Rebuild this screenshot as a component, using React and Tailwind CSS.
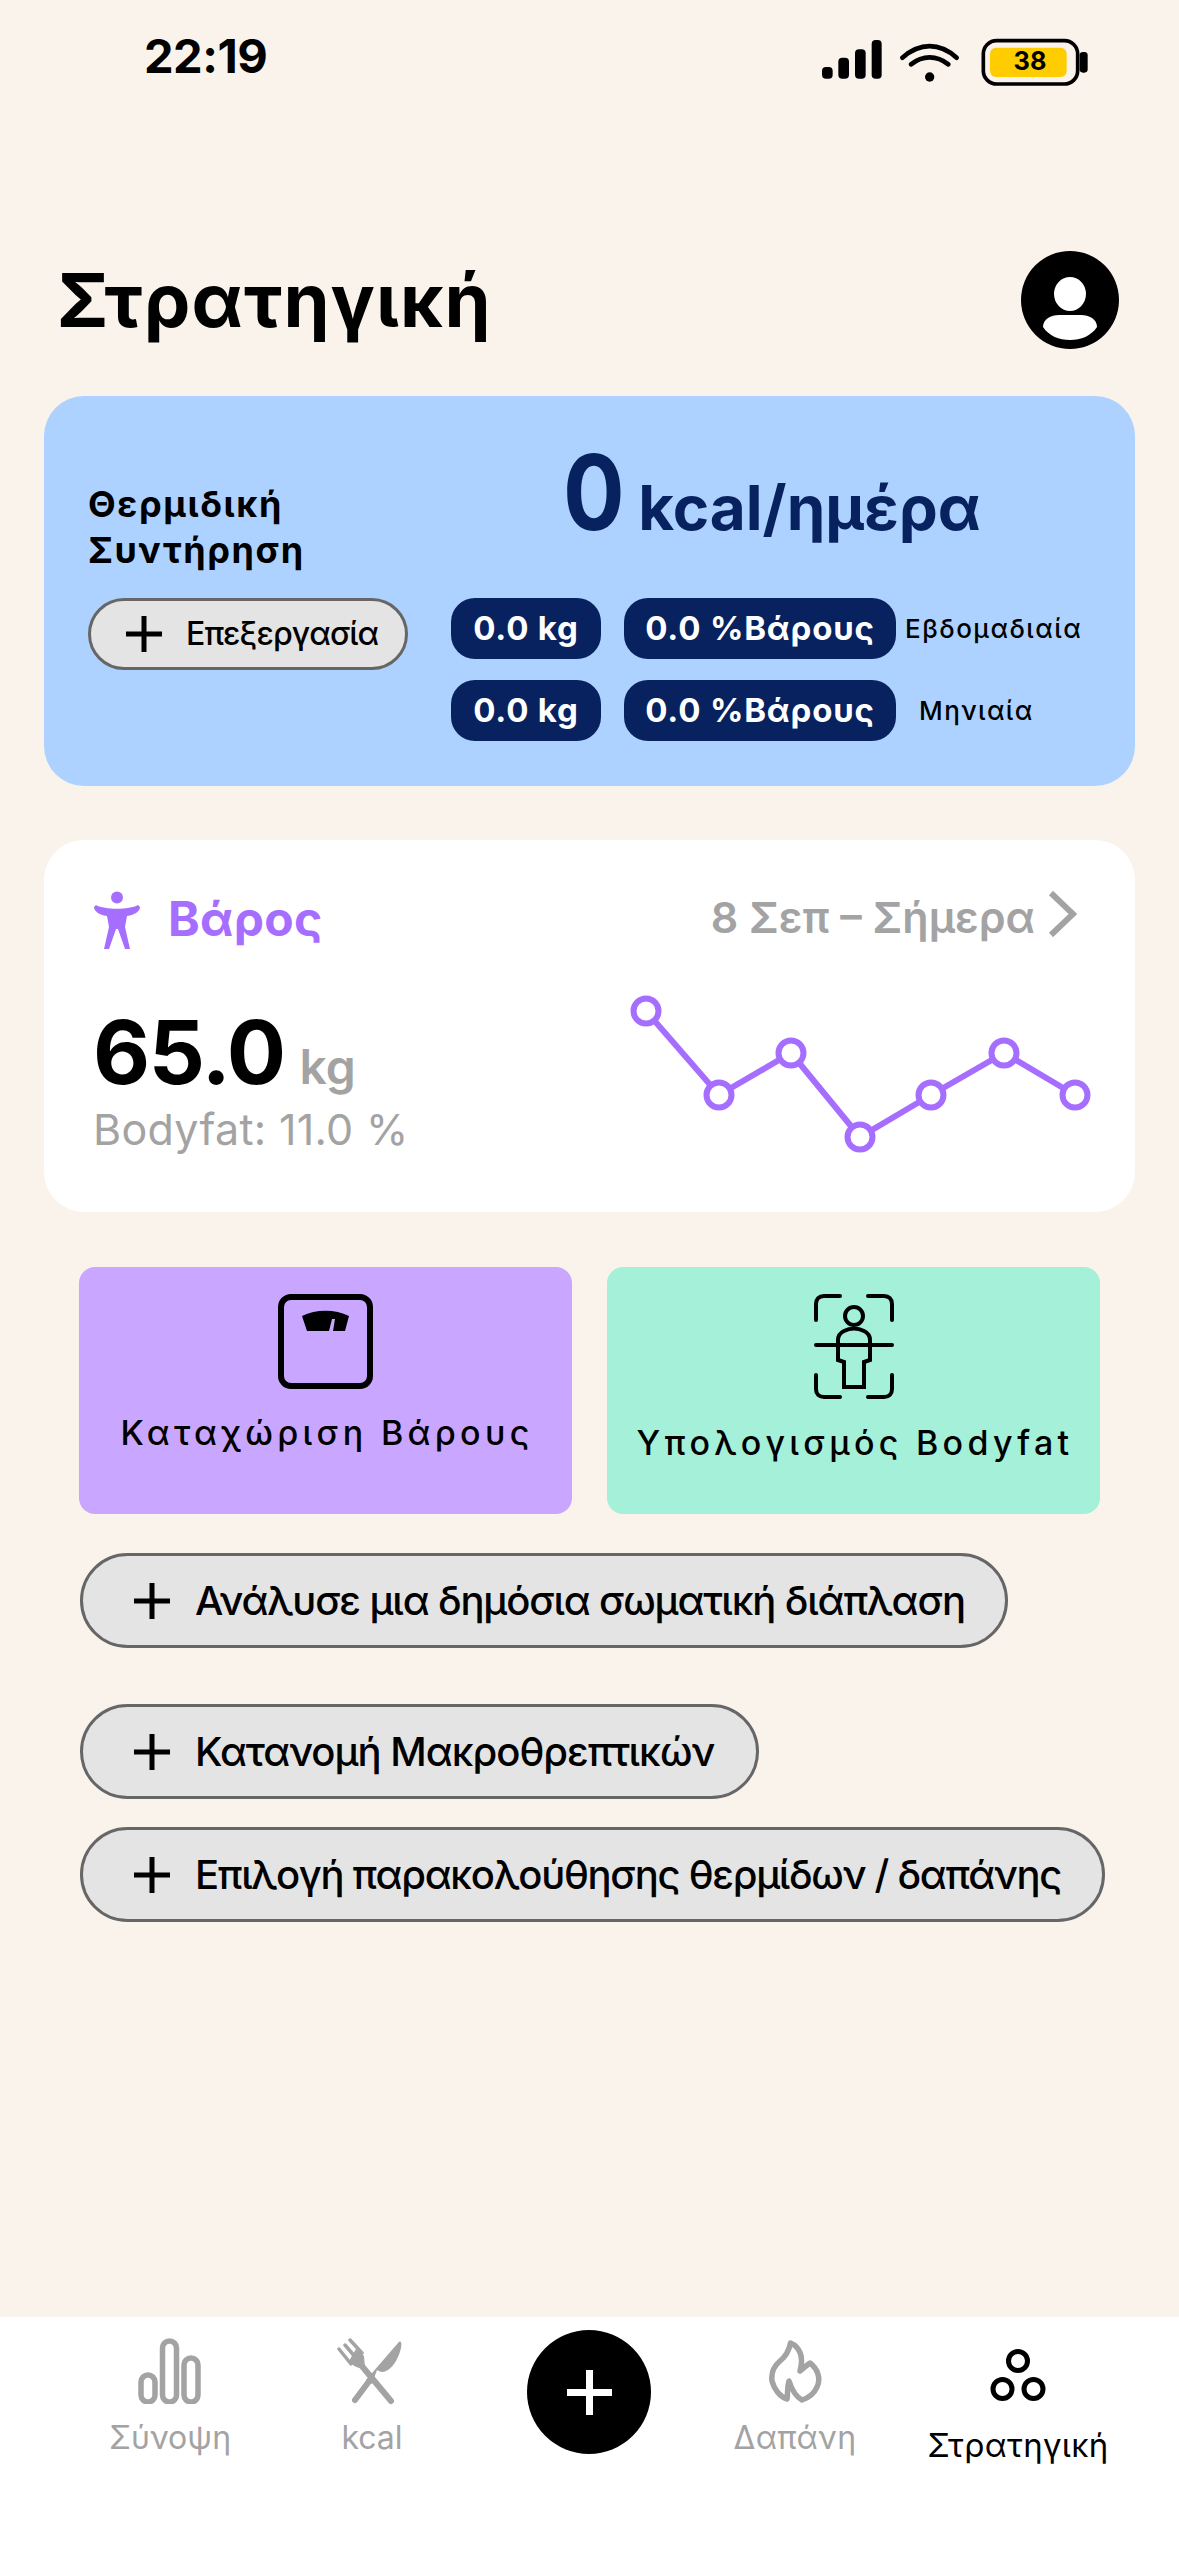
import React from "react";

function StatusIcons() {
  return (
    <svg width="340" height="80" viewBox="0 0 1020 240">
      <rect x="126" y="138" width="32" height="35" rx="12" fill="#000" />
      <rect x="175" y="110" width="32" height="63" rx="12" fill="#000" />
      <rect x="225" y="85" width="32" height="88" rx="12" fill="#000" />
      <rect x="275" y="57" width="30" height="116" rx="12" fill="#000" />
      <path d="M367 110 C 420 64, 478 64, 530 110" fill="none" stroke="#000" strokeWidth="14" strokeLinecap="round" />
      <path d="M393 130 C 428 102, 470 102, 505 130" fill="none" stroke="#000" strokeWidth="14" strokeLinecap="round" />
      <circle cx="449" cy="168" r="14" fill="#000" />
      <rect x="610" y="59" width="283" height="130" rx="40" fill="none" stroke="#000" strokeWidth="11" />
      <rect x="630" y="80" width="230" height="88" rx="18" fill="#FFCC00" />
      <rect x="899" y="93" width="24" height="62" rx="10" fill="#000" />
      <text x="750" y="146" textAnchor="middle" fontSize="76" fontWeight="700" fill="#000" className="font-[family-name:Inter]">38</text>
    </svg>
  );
}

function Plus({ size = 36 }) {
  return (
    <svg width={size} height={size} viewBox="0 0 36 36" className="shrink-0">
      <path d="M18 0V36M0 18H36" stroke="#000" strokeWidth="5" />
    </svg>
  );
}

function Pill({ width, track, children, className }) {
  return (
    <div className={`flex h-[95px] items-center rounded-full border-[3px] border-[#666] bg-[#e4e4e4] pl-[51px] ${width} ${className || ""}`}>
      <Plus />
      <span className={`ml-[25px] whitespace-nowrap text-[40px] font-medium text-black ${track}`}>{children}</span>
    </div>
  );
}

function Stat({ children, w }) {
  return (
    <div className={`flex h-[61px] items-center justify-center rounded-[24px] bg-[#07225f] text-[33px] font-bold tracking-[0.8px] text-white ${w}`}>
      {children}
    </div>
  );
}

function WeightChart() {
  const pts = [[21, 21], [94, 105], [166, 63], [235, 147], [306, 105], [379, 63], [450, 105]];
  return (
    <svg width="480" height="170" viewBox="0 0 480 170">
      <polyline points={pts.map((p) => p.join(",")).join(" ")} fill="none" stroke="#a66eff" strokeWidth="6" />
      {pts.map((p) => (
        <circle key={p[0]} cx={p[0]} cy={p[1]} r="12.5" fill="#fff" stroke="#a66eff" strokeWidth="6" />
      ))}
    </svg>
  );
}

function ScaleIcon() {
  return (
    <svg width="95" height="95" viewBox="0 0 95 95">
      <rect x="3" y="3" width="89" height="89" rx="10" fill="none" stroke="#000" strokeWidth="6" />
      <path d="M24 22 C 38 15, 57 15, 71 22 L 67 37 H 55 L 57 25 H 54 L 51 37 H 29 Z" fill="#000" />
    </svg>
  );
}

function BodyScanIcon() {
  return (
    <svg width="80" height="105" viewBox="0 0 80 105" fill="none" stroke="#000" strokeWidth="4" strokeLinecap="round">
      <path d="M2 26V10C2 5 5 2 10 2H26M54 2H70C75 2 78 5 78 10V26M2 81V95C2 100 5 103 10 103H26M54 103H70C75 103 78 100 78 95V81" />
      <circle cx="40" cy="22" r="9" />
      <path d="M24 66V46C24 41 26 39 30 37C36 34 44 34 50 37C54 39 56 41 56 46V66L50 68V93H30V68Z" />
      <path d="M2 51H78" />
    </svg>
  );
}

function BarsIcon() {
  return (
    <svg width="64" height="66" viewBox="0 0 64 66" fill="none" stroke="#a3a3a3" strokeWidth="5.5">
      <rect x="3" y="37" width="14" height="27" rx="7" />
      <rect x="24.5" y="3" width="14" height="61" rx="7" />
      <rect x="46" y="20" width="14" height="44" rx="7" />
    </svg>
  );
}

function CutleryIcon() {
  return (
    <svg width="72" height="70" viewBox="18 18 72 70">
      <path d="M37 80L52 60" stroke="#a3a3a3" strokeWidth="6" strokeLinecap="round" />
      <path d="M48 60L80 23C83 20 84 22 83 28C81 37 76 46 70 50C65 53 62 52 59 50L54 64Z" fill="#a3a3a3" />
      <path d="M73 81L43 45" stroke="#a3a3a3" strokeWidth="6" strokeLinecap="round" />
      <path d="M21 29L33 44M27 25L38 38M32 20L44 33" stroke="#a3a3a3" strokeWidth="3.5" strokeLinecap="round" />
      <path d="M31 41C36 47 41 49 47 48L46 36L38 29Z" fill="#a3a3a3" />
    </svg>
  );
}

function FlameIcon() {
  return (
    <svg width="56" height="66" viewBox="39 21 56 66" className="ml-[3px]" fill="none" stroke="#a3a3a3" strokeWidth="5.5" strokeLinejoin="round" strokeLinecap="round">
      <path d="M60.5 24C70 28 74 38 70 52C74 49 77 46 80 44C88 50 91 60 87 68C84 75 78 79 72 81C66 78 62 71 59 62C57 68 58 75 57 80C50 78 44 70 42 62C41 54 44 47 50 42C55 38 59 32 60.5 24Z" />
    </svg>
  );
}

function CirclesIcon() {
  return (
    <svg width="56" height="53" viewBox="0 0 56 53" fill="none" stroke="#000" strokeWidth="5">
      <circle cx="28" cy="12" r="9.5" />
      <circle cx="12.5" cy="40" r="9.5" />
      <circle cx="43.5" cy="40" r="9.5" />
    </svg>
  );
}

export default function App() {
  return (
    <div className="flex h-[2556px] w-[1179px] flex-col overflow-hidden bg-[#faf3ec] text-black font-[family-name:Inter]">
      <div className="flex h-[100px] items-start justify-between pl-[144px] pr-[59px] pt-[21px]">
        <span className="text-[47px] leading-[70px] font-bold tracking-[-0.5px]">22:19</span>
        <StatusIcons />
      </div>

      <div className="flex h-[296px] items-start justify-between pl-[57px] pr-[60px] pt-[151px]">
        <h1 className="text-[74px] leading-[98px] font-bold tracking-[1.1px]">Στρατηγική</h1>
        <svg width="98" height="98" viewBox="0 0 98 98">
          <circle cx="49" cy="49" r="49" fill="#000" />
          <ellipse cx="49" cy="43" rx="16" ry="17" fill="#fff" />
          <path d="M22 76C22 68 30 64 38 64H60C68 64 76 68 76 76C70 85 60 89 49 89C38 89 28 85 22 76Z" fill="#fff" />
        </svg>
      </div>

      <section className="mx-[44px] flex h-[390px] rounded-[40px] bg-[#aed2ff]">
        <div className="w-[407px] shrink-0 pl-[44px] pt-[85px]">
          <p className="text-[36px] leading-[46px] font-bold tracking-[1.6px]">
            Θερμιδική
            <br />
            Συντήρηση
          </p>
          <div className="mt-[25px] flex h-[72px] w-[320px] items-center rounded-full border-[3px] border-[#666] bg-[#e4e4e4] pl-[35px]">
            <Plus size={36} />
            <span className="ml-[24px] text-[32px] font-medium tracking-[-0.9px]">Επεξεργασία</span>
          </div>
        </div>
        <div className="flex-1">
          <div className="flex h-[202px] items-baseline pl-[112px] pt-[36px] text-[#07225f] font-bold">
            <span className="inline-block origin-left scale-x-[0.88] text-[104px] leading-[120px] tracking-[-2px]">0</span>
            <span className="ml-[7px] text-[62px] leading-[120px]">kcal/ημέρα</span>
          </div>
          <div className="flex h-[61px] items-center gap-[23px]">
            <Stat w="w-[150px]">0.0 kg</Stat>
            <Stat w="w-[272px]">0.0 %Βάρους</Stat>
            <span className="-ml-[14px] text-[26px] font-medium tracking-[1.5px]">Εβδομαδιαία</span>
          </div>
          <div className="mt-[21px] flex h-[61px] items-center gap-[23px]">
            <Stat w="w-[150px]">0.0 kg</Stat>
            <Stat w="w-[272px]">0.0 %Βάρους</Stat>
            <span className="text-[26px] font-medium tracking-[1.4px]">Μηνιαία</span>
          </div>
        </div>
      </section>

      <section className="mx-[44px] mt-[54px] h-[372px] rounded-[40px] bg-white pl-[49px] pr-[58px] pt-[40px]">
        <div className="flex h-[80px] items-center justify-between">
          <div className="flex items-center">
            <svg width="48" height="58" viewBox="0 0 48 58" fill="#a66eff">
              <circle cx="24" cy="6.5" r="6" />
              <path d="M1 16L3 14C12 19 36 19 45 14L47 16C47 20 42 24 34 25L32 36L37 58H32L25 38H23L16 58H11L16 36L14 25C6 24 1 20 1 16Z" />
            </svg>
            <span className="ml-[27px] -mt-[2px] text-[48px] font-bold tracking-[0.3px] text-[#a66eff]">Βάρος</span>
          </div>
          <div className="flex items-center text-[#a3a3a3]">
            <span className="-mt-[6px] text-[43px] font-semibold">8 Σεπ – Σήμερα</span>
            <svg width="30" height="46" viewBox="0 0 30 46" className="ml-[12px] -mt-[12px]" fill="none" stroke="#a3a3a3" strokeWidth="6">
              <path d="M4 2L26 23L4 44" />
            </svg>
          </div>
        </div>
        <div className="-mr-[28px] mt-[30px] flex items-start justify-between">
          <div className="pt-[16px]">
            <div className="flex items-baseline">
              <span className="text-[88px] leading-[92px] font-bold tracking-[-1.5px]">65.0</span>
              <span className="ml-[15px] text-[48px] font-semibold text-[#a3a3a3]">kg</span>
            </div>
            <p className="mt-[1px] text-[43px] leading-[50px] tracking-[0.3px] text-[#a3a3a3]">Bodyfat: 11.0 %</p>
          </div>
          <WeightChart />
        </div>
      </section>

      <div className="ml-[79px] mt-[55px] flex gap-[35px]">
        <div className="flex h-[247px] w-[493px] flex-col items-center rounded-[16px] bg-[#c9a6ff] pt-[27px]">
          <ScaleIcon />
          <span className="ml-[3px] mt-[24px] text-[34px] leading-[40px] font-medium tracking-[4.3px]">Καταχώριση Βάρους</span>
        </div>
        <div className="flex h-[247px] w-[493px] flex-col items-center rounded-[16px] bg-[#a4f0d9] pt-[27px]">
          <BodyScanIcon />
          <span className="ml-[3px] mt-[24px] text-[34px] leading-[40px] font-medium tracking-[4.3px]">Υπολογισμός Bodyfat</span>
        </div>
      </div>

      <div className="ml-[80px] mt-[39px] flex flex-col items-start">
        <Pill width="w-[928px]" track="tracking-[-1.15px]">Ανάλυσε μια δημόσια σωματική διάπλαση</Pill>
        <Pill width="w-[679px]" track="tracking-[-1px]" className="mt-[56px]">Κατανομή Μακροθρεπτικών</Pill>
        <Pill width="w-[1025px]" track="tracking-[-1.3px]" className="mt-[28px]">Επιλογή παρακολούθησης θερμίδων / δαπάνης</Pill>
      </div>

      <nav className="mt-auto flex h-[239px] bg-white pl-[60px] text-[32px] leading-[40px] text-[#a3a3a3]">
        <div className="flex w-[220px] flex-col items-center pt-[21px]">
          <BarsIcon />
          <span className="mt-[14px]">Σύνοψη</span>
        </div>
        <div className="flex w-[184px] flex-col items-center pt-[21px]">
          <CutleryIcon />
          <span className="mt-[10px]">kcal</span>
        </div>
        <div className="flex w-[250px] justify-center pt-[13px]">
          <div className="flex h-[124px] w-[124px] items-center justify-center rounded-full bg-black">
            <svg width="45" height="45" viewBox="0 0 45 45">
              <path d="M22.5 0V45M0 22.5H45" stroke="#fff" strokeWidth="7" />
            </svg>
          </div>
        </div>
        <div className="flex w-[162px] flex-col items-center pt-[23px]">
          <FlameIcon />
          <span className="mt-[12px] tracking-[0.3px]">Δαπάνη</span>
        </div>
        <div className="flex w-[284px] flex-col items-center pt-[32px] text-black">
          <CirclesIcon />
          <span className="mt-[23px] text-[33px] tracking-[0.3px]">Στρατηγική</span>
        </div>
      </nav>
    </div>
  );
}
